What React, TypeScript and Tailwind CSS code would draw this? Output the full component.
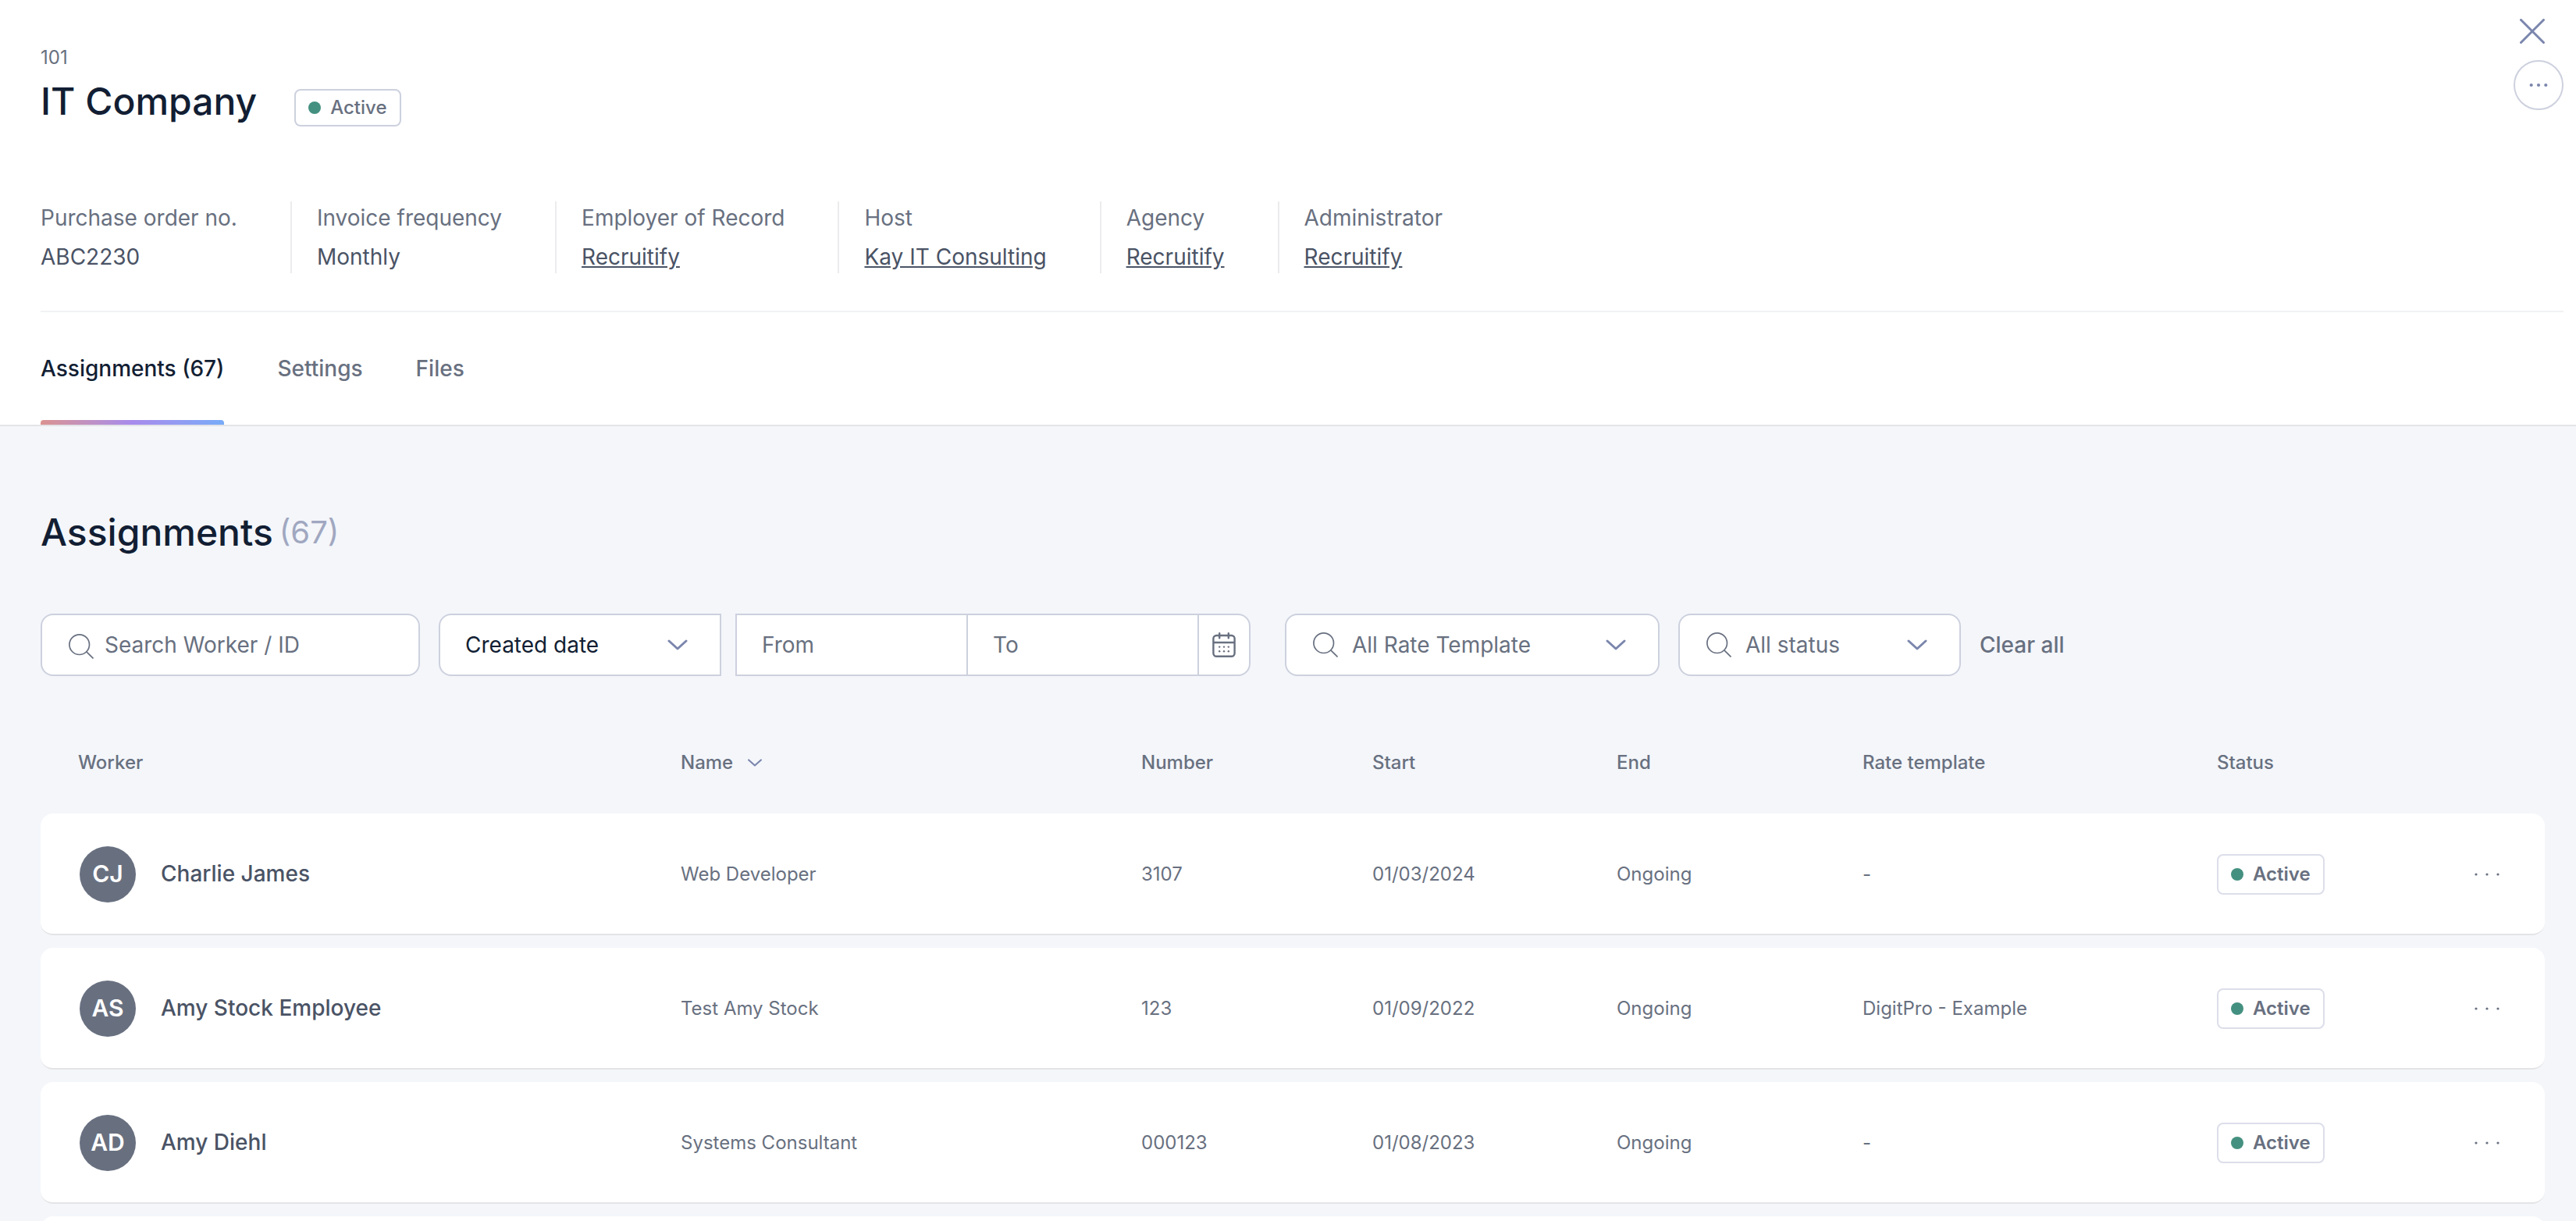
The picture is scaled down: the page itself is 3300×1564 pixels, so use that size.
import React, { useState } from "react";

interface Assignment {
  initials: string;
  worker: string;
  name: string;
  number: string;
  start: string;
  end: string;
  rateTemplate: string;
}

interface Detail {
  label: string;
  value: string;
  link?: boolean;
}

const details: Detail[] = [
  { label: "Purchase order no.", value: "ABC2230" },
  { label: "Invoice frequency", value: "Monthly" },
  { label: "Employer of Record", value: "Recruitify", link: true },
  { label: "Host", value: "Kay IT Consulting", link: true },
  { label: "Agency", value: "Recruitify", link: true },
  { label: "Administrator", value: "Recruitify", link: true },
];

const tabs = ["Assignments (67)", "Settings", "Files"];

const assignments: Assignment[] = [
  {
    initials: "CJ",
    worker: "Charlie James",
    name: "Web Developer",
    number: "3107",
    start: "01/03/2024",
    end: "Ongoing",
    rateTemplate: "-",
  },
  {
    initials: "AS",
    worker: "Amy Stock Employee",
    name: "Test Amy Stock",
    number: "123",
    start: "01/09/2022",
    end: "Ongoing",
    rateTemplate: "DigitPro - Example",
  },
  {
    initials: "AD",
    worker: "Amy Diehl",
    name: "Systems Consultant",
    number: "000123",
    start: "01/08/2023",
    end: "Ongoing",
    rateTemplate: "-",
  },
];

const SearchIcon: React.FC<{ className?: string }> = ({ className = "" }) => (
  <svg
    viewBox="0 0 32 32"
    fill="none"
    stroke="#687080"
    strokeWidth="1.7"
    className={`h-8 w-8 ${className}`}
  >
    <circle cx="13.7" cy="13.7" r="12.8" />
    <path d="M22.6 22.6 31.5 31.5" />
  </svg>
);

const ChevronIcon: React.FC<{ className?: string }> = ({ className = "" }) => (
  <svg
    viewBox="0 0 26 14"
    fill="none"
    stroke="#7b86ad"
    strokeWidth="3"
    strokeLinecap="round"
    strokeLinejoin="round"
    className={className}
  >
    <path d="M2 2 13 12 24 2" />
  </svg>
);

const CalendarIcon = () => (
  <svg
    viewBox="0 0 30 32"
    fill="none"
    stroke="#687080"
    strokeWidth="2.4"
    className="h-8 w-[30px]"
  >
    <rect x="1.4" y="4" width="27.2" height="26.8" rx="4" />
    <path d="M1.4 13h27.2" />
    <path d="M9.2 1.2v6M20.8 1.2v6" strokeLinecap="round" />
    <g fill="#687080" stroke="none">
      <circle cx="9.2" cy="18.6" r="1.2" />
      <circle cx="15" cy="18.6" r="1.2" />
      <circle cx="20.8" cy="18.6" r="1.2" />
      <circle cx="9.2" cy="24.2" r="1.2" />
      <circle cx="15" cy="24.2" r="1.2" />
      <circle cx="20.8" cy="24.2" r="1.2" />
    </g>
  </svg>
);

// Select box with an optional search icon on the left
interface FilterSelectProps {
  label: string;
  className: string;
  selectClassName: string;
  search?: boolean;
}

const FilterSelect: React.FC<FilterSelectProps> = ({
  label,
  className,
  selectClassName,
  search,
}) => (
  <div className={`relative h-20 ${className}`}>
    {search && (
      <SearchIcon className="pointer-events-none absolute top-6 left-9" />
    )}
    <select
      aria-label={label}
      className={`h-full w-full appearance-none border-2 border-[#cdd1de] bg-white text-[28px] ${selectClassName}`}
    >
      <option>{label}</option>
    </select>
    <ChevronIcon className="pointer-events-none absolute top-[33px] right-[43px] h-3.5 w-[26px]" />
  </div>
);

const App: React.FC = () => {
  // Currently selected tab
  const [activeTab, setActiveTab] = useState(tabs[0]);

  return (
    <div
      className="h-screen overflow-hidden bg-[#f4f6fa] text-[#687080]"
      style={{ fontFamily: "Inter, sans-serif" }}
    >
      <header className="border-b-2 border-[#e3e4e7] bg-white pr-4 pl-[52px]">
        <div className="flex justify-between">
          <div className="pt-[58px]">
            <p className="text-2xl leading-8">101</p>
            <div className="mt-2 flex items-end gap-12">
              <h1 className="text-5xl leading-[64px] font-medium text-[#121e33]">
                IT Company
              </h1>
              <span className="flex h-12 items-center gap-3 rounded-lg border-2 border-[#cdd1de] px-4 text-2xl font-medium">
                <span className="h-4 w-4 rounded-full bg-[#449080]" />
                Active
              </span>
            </div>
          </div>
          <div className="flex flex-col items-end gap-[21px] pt-6">
            <button aria-label="Close" className="mr-6">
              <svg
                viewBox="0 0 32 32"
                stroke="#7b86ad"
                strokeWidth="3"
                strokeLinecap="round"
                className="h-8 w-8"
              >
                <path d="M1.5 1.5l29 29M30.5 1.5l-29 29" />
              </svg>
            </button>
            <button
              aria-label="More actions"
              className="flex h-16 w-16 items-center justify-center rounded-full border-2 border-[#cdd1de]"
            >
              <svg viewBox="0 0 24 6" fill="#7b86ad" className="h-1.5 w-6">
                <circle cx="2.7" cy="3" r="2.1" />
                <circle cx="12" cy="3" r="2.1" />
                <circle cx="21.3" cy="3" r="2.1" />
              </svg>
            </button>
          </div>
        </div>

        {/* Company details */}
        <dl className="mt-24 flex border-b-2 border-[#f1f2f3] pb-12 text-[28px] leading-[42px]">
          {details.map(({ label, value, link }) => (
            <div
              key={label}
              className="flex flex-col gap-2 border-l-2 border-[#ececee] pr-17 pl-8 first:border-l-0 first:pl-0"
            >
              <dt>{label}</dt>
              <dd className="text-[#4a5365]">
                {link ? (
                  <a href="#" className="underline">
                    {value}
                  </a>
                ) : (
                  value
                )}
              </dd>
            </div>
          ))}
        </dl>

        <nav className="flex gap-17">
          {tabs.map((tab) => (
            <button
              key={tab}
              onClick={() => setActiveTab(tab)}
              className={`relative h-36 text-[28px] font-medium ${
                tab === activeTab ? "text-[#121e33]" : ""
              }`}
            >
              {tab}
              {tab === activeTab && (
                <span className="absolute inset-x-0 bottom-0 h-1.5 rounded-t bg-linear-to-r from-[#db9290] via-[#a78bec] to-[#77abf8]" />
              )}
            </button>
          ))}
        </nav>
      </header>

      <main className="pt-[104px] pr-10 pl-[52px]">
        <h2 className="flex items-center gap-2 text-5xl leading-[64px] font-medium text-[#121e33]">
          Assignments
          <span className="text-[40px] font-normal text-[#a0a7c0]">(67)</span>
        </h2>

        {/* Filters */}
        <div className="mt-18 flex items-center gap-6">
          <label className="flex h-20 w-[486px] items-center gap-3.5 rounded-2xl border-2 border-[#cdd1de] bg-white px-[34px]">
            <SearchIcon className="mt-1 shrink-0" />
            <input
              type="text"
              aria-label="Search Worker / ID"
              placeholder="Search Worker / ID"
              className="w-full text-[28px] outline-none placeholder:text-[#687080]"
            />
          </label>

          <div className="mr-5 flex items-center gap-[18px]">
            <FilterSelect
              label="Created date"
              className="w-[362px]"
              selectClassName="rounded-l-2xl pl-8 text-[#121e33]"
            />
            <div className="flex h-20 w-[660px] divide-x-2 divide-[#cdd1de] overflow-hidden rounded-r-2xl border-2 border-[#cdd1de] bg-white">
              <input
                type="text"
                aria-label="From"
                placeholder="From"
                className="w-0 flex-1 px-8 text-[28px] outline-none placeholder:text-[#687080]"
              />
              <input
                type="text"
                aria-label="To"
                placeholder="To"
                className="w-0 flex-1 px-8 text-[28px] outline-none placeholder:text-[#687080]"
              />
              <button
                aria-label="Open calendar"
                className="flex w-16 items-center justify-center"
              >
                <CalendarIcon />
              </button>
            </div>
          </div>

          <FilterSelect
            label="All Rate Template"
            className="w-[480px]"
            selectClassName="rounded-2xl pl-[84px]"
            search
          />
          <FilterSelect
            label="All status"
            className="w-[362px]"
            selectClassName="rounded-2xl pl-[84px]"
            search
          />
          <button className="text-[28px] font-medium">Clear all</button>
        </div>

        {/* Assignments table */}
        <table className="mt-[46px] w-full table-fixed border-separate border-spacing-x-0 border-spacing-y-4 text-left text-2xl">
          <colgroup>
            <col className="w-[820px]" />
            <col className="w-[590px]" />
            <col className="w-[296px]" />
            <col className="w-[313px]" />
            <col className="w-[315px]" />
            <col className="w-[454px]" />
            <col />
          </colgroup>
          <thead>
            <tr className="h-[98px]">
              <th className="pl-12 font-medium">Worker</th>
              <th className="font-medium">
                <button className="flex items-center gap-[18px]">
                  Name
                  <ChevronIcon className="h-2.5 w-5" />
                </button>
              </th>
              <th className="font-medium">Number</th>
              <th className="font-medium">Start</th>
              <th className="font-medium">End</th>
              <th className="font-medium">Rate template</th>
              <th className="font-medium">Status</th>
            </tr>
          </thead>
          <tbody>
            {assignments.map((item) => (
              <tr
                key={item.worker}
                className="h-[156px] *:border-b-2 *:border-[#e4e4e6] *:bg-white *:pt-0.5"
              >
                <td className="rounded-l-2xl pl-[50px]">
                  <div className="flex items-center gap-8 text-[28px] font-medium text-[#4a5365]">
                    <span className="flex h-18 w-18 items-center justify-center rounded-full bg-[#687080] text-[30px] font-semibold text-white">
                      {item.initials}
                    </span>
                    {item.worker}
                  </div>
                </td>
                <td>{item.name}</td>
                <td>{item.number}</td>
                <td>{item.start}</td>
                <td>{item.end}</td>
                <td>{item.rateTemplate}</td>
                <td className="rounded-r-2xl pr-14">
                  <div className="flex items-center justify-between">
                    <span className="flex h-[52px] items-center gap-3 rounded-lg border-2 border-[#dcdeea] px-4 font-semibold">
                      <span className="h-4 w-4 rounded-full bg-[#449080]" />
                      Active
                    </span>
                    <button aria-label={`Actions for ${item.worker}`}>
                      <svg
                        viewBox="0 0 36 6"
                        fill="#687080"
                        className="h-1.5 w-9"
                      >
                        <circle cx="4" cy="3" r="1.6" />
                        <circle cx="18" cy="3" r="1.6" />
                        <circle cx="32" cy="3" r="1.6" />
                      </svg>
                    </button>
                  </div>
                </td>
              </tr>
            ))}
            <tr className="h-[156px]">
              <td colSpan={7} className="rounded-2xl bg-white" />
            </tr>
          </tbody>
        </table>
      </main>
    </div>
  );
};

export default App;
